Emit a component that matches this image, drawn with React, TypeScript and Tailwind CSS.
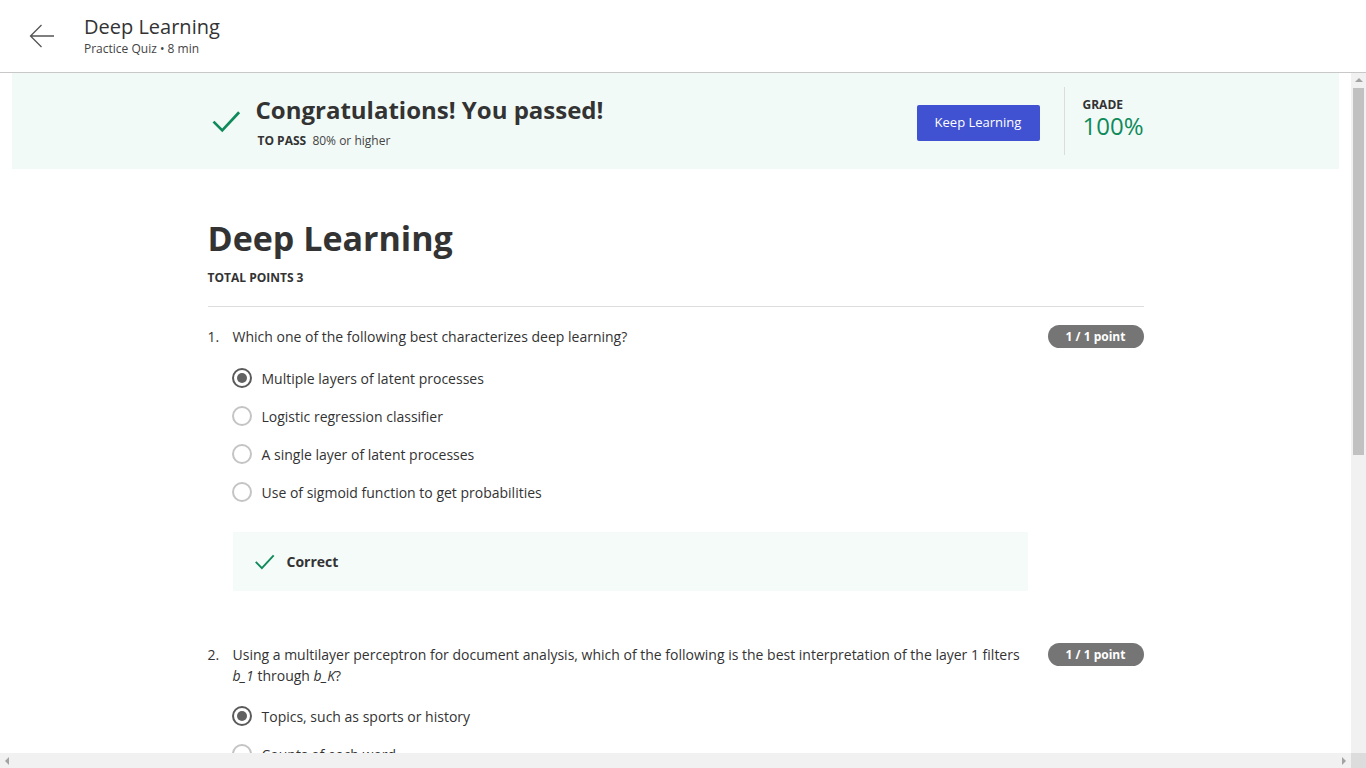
import React from "react";

const font = { fontFamily: '"Open Sans", "Liberation Sans", sans-serif' };

const questions = [
  {
    n: 1,
    text: <>Which one of the following best characterizes deep learning?</>,
    options: [
      "Multiple layers of latent processes",
      "Logistic regression classifier",
      "A single layer of latent processes",
      "Use of sigmoid function to get probabilities",
    ],
    picked: 0,
    correct: true,
  },
  {
    n: 2,
    text: (
      <>
        Using a multilayer perceptron for document analysis, which of the following is the best
        interpretation of the layer 1 filters <i>b_1</i> through <i>b_K</i>?
      </>
    ),
    options: ["Topics, such as sports or history", "Counts of each word", "Sentences", "Letters"],
    picked: 0,
    correct: true,
  },
];

const Check = ({ className }: { className?: string }) => (
  <svg viewBox="0 0 24 24" className={className} fill="none" stroke="currentColor" strokeWidth="2.2">
    <path d="M2 12.5l7 7L22.5 5" />
  </svg>
);

const Radio = ({ on }: { on: boolean }) =>
  on ? (
    <span className="flex h-5 w-5 items-center justify-center rounded-full border-2 border-[#5a5a5a]">
      <span className="h-[10px] w-[10px] rounded-full bg-[#616161]" />
    </span>
  ) : (
    <span className="h-5 w-5 rounded-full border-2 border-[#c4c4c4]" />
  );

const Question = ({ q }: { q: (typeof questions)[number] }) => (
  <div className="pb-[53px]">
    <div className="flex items-start">
      <div className="flex flex-1 text-[14px] leading-[21px] text-[#333]">
        <span className="w-[25px] shrink-0">{q.n}.</span>
        <p className="pr-[20px]">{q.text}</p>
      </div>
      <span className="mt-[-1px] flex h-[23px] w-[96px] shrink-0 items-center justify-center rounded-full bg-[#757575] text-[12px] font-bold text-white">
        1 / 1 point
      </span>
    </div>
    <div className="mt-[20px] flex flex-col gap-[18px] pl-[24px]">
      {q.options.map((o, i) => (
        <label key={o} className="flex h-[20px] items-center gap-[10px] text-[14px] text-[#333]">
          <Radio on={i === q.picked} />
          <span>{o}</span>
        </label>
      ))}
    </div>
    {q.correct && (
      <div className="ml-[25px] mt-[30px] flex h-[59px] w-[795px] items-center gap-[12px] bg-[#f5fbf9] pl-[21px]">
        <Check className="h-[21px] w-[21px] text-[#0f8a5b]" />
        <span className="text-[14px] font-bold text-[#333]">Correct</span>
      </div>
    )}
  </div>
);

export default function App() {
  return (
    <div className="flex h-[768px] w-[1366px] flex-col overflow-hidden bg-white" style={font}>
      <header className="flex h-[73px] shrink-0 items-center border-b border-[#c8c8c8]">
        <button className="ml-[29px] mr-[29px] text-[#555]">
          <svg viewBox="0 0 26 24" className="h-[24px] w-[26px]" fill="none" stroke="currentColor" strokeWidth="1.3">
            <path d="M25 12H1.5M12.5 1L1.5 12l11 11" />
          </svg>
        </button>
        <div className="mt-[-2px]">
          <h1 className="text-[20px] leading-[26px] text-[#333]">Deep Learning</h1>
          <p className="mt-[1px] text-[12px] leading-[16px] text-[#444]">Practice Quiz • 8 min</p>
        </div>
      </header>

      <div className="flex flex-1 min-h-0">
        <div className="flex-1 overflow-hidden">
          <div className="mx-[12px] h-[96px] bg-[#f2faf7]">
            <div className="mx-auto flex h-full w-[936px] items-center">
              <Check className="ml-[3px] h-[30px] w-[30px] text-[#0f8a5b]" />
              <div className="ml-[15px] mt-[2px]">
                <h2 className="text-[24px] font-bold leading-[30px] text-[#333]">Congratulations! You passed!</h2>
                <p className="ml-[2px] mt-[7px] text-[12px] text-[#444]">
                  <span className="font-bold text-[#333]">TO PASS</span>&nbsp; 80% or higher
                </p>
              </div>
              <div className="flex-1" />
              <button className="mt-[4px] h-[36px] w-[123px] rounded-[2px] bg-[#4051d1] text-[13px] text-white">
                Keep Learning
              </button>
              <div className="ml-[24px] h-[68px] w-px bg-[#dcdcdc]" />
              <div className="ml-[18px] w-[61px] pb-[6px]">
                <p className="text-[12px] font-bold leading-[16px] text-[#333]">GRADE</p>
                <p className="text-[24px] leading-[26px] text-[#0f8a5b]">100%</p>
              </div>
            </div>
          </div>

          <main className="mx-auto w-[936px] pt-[48px]">
            <h1 className="text-[34px] font-bold leading-[42px] text-[#333]">Deep Learning</h1>
            <p className="mt-[10px] text-[12px] font-bold text-[#333]">TOTAL POINTS 3</p>
            <div className="mt-[19px] h-px bg-[#dedede]" />
            <div className="pt-[19px]">
              {questions.map((q) => (
                <Question key={q.n} q={q} />
              ))}
            </div>
          </main>
        </div>
        <div className="flex w-[15px] flex-col items-center bg-[#f1f1f1]">
          <span className="mt-[5px] h-0 w-0 border-x-[4px] border-b-[4px] border-x-transparent border-b-[#a3a3a3]" />
          <div className="mt-[6px] h-[367px] w-[11px] bg-[#c1c1c1]" />
          <div className="flex-1" />
        </div>
      </div>

      <div className="flex h-[15px] shrink-0 bg-[#f1f1f1]">
        <div className="flex flex-1 items-center justify-between px-[5px]">
          <span className="h-0 w-0 border-y-[4px] border-r-[4px] border-y-transparent border-r-[#a3a3a3]" />
          <span className="h-0 w-0 border-y-[4px] border-l-[4px] border-y-transparent border-l-[#a3a3a3]" />
        </div>
        <div className="flex w-[15px] items-start justify-center bg-[#dcdcdc]" />
      </div>
    </div>
  );
}
